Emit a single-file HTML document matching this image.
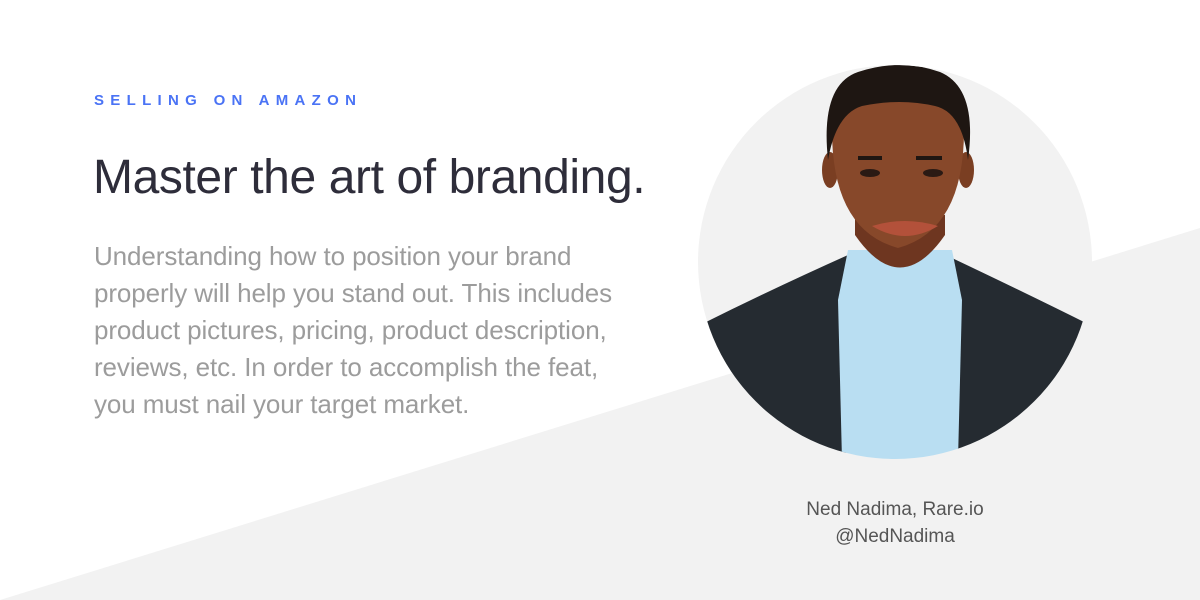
<!DOCTYPE html>
<html><head><meta charset="utf-8"><style>
html,body{margin:0;padding:0}
body{width:1200px;height:600px;position:relative;overflow:hidden;background:#fff;font-family:"Liberation Sans",sans-serif}
.k{position:absolute;left:94px;top:92px;font-size:15px;font-weight:bold;letter-spacing:6.3px;color:#4a73f5;white-space:nowrap}
h1{position:absolute;left:93px;top:150px;margin:0;font-size:48px;font-weight:normal;color:#2e2d3a;letter-spacing:-0.4px;white-space:nowrap}
p{position:absolute;left:94px;top:238px;margin:0;font-size:26px;line-height:37px;color:#9c9c9c;font-weight:normal;white-space:nowrap;letter-spacing:-0.1px}
.n{position:absolute;left:780px;width:230px;text-align:center;font-size:19px;color:#555}
</style></head><body>
<svg width="1200" height="600" style="position:absolute;left:0;top:0">
<polygon points="0,600 1200,228 1200,600" fill="#f2f2f2"/>
<defs><clipPath id="c"><circle cx="895" cy="262" r="197"/></clipPath></defs>
<circle cx="895" cy="262" r="197" fill="#f2f2f2"/>
<g clip-path="url(#c)">
<path d="M700,325 Q770,290 848,255 L846,460 L700,460Z" fill="#252b31"/>
<path d="M1090,325 Q1030,295 952,258 L958,460 L1090,460Z" fill="#252b31"/>
<path d="M848,250 L952,250 L962,300 L958,460 L842,460 L838,300Z" fill="#b9def2"/>
<path d="M855,235 Q900,300 945,235 L945,215 L855,215Z" fill="#6e3620"/>
<ellipse cx="830" cy="170" rx="8" ry="18" fill="#7a3e22"/>
<ellipse cx="966" cy="170" rx="8" ry="18" fill="#7a3e22"/>
<path d="M832,130 Q832,230 898,248 Q964,230 964,130 Q950,95 898,95 Q845,95 832,130Z" fill="#87482a"/>
<path d="M828,160 Q820,85 858,72 Q900,58 940,72 Q978,88 968,160 Q962,112 935,106 Q900,98 862,106 Q836,114 828,160Z" fill="#1e1612"/>
<path d="M872,226 Q905,216 938,226 Q905,246 872,226Z" fill="#b3513a"/>
<ellipse cx="870" cy="173" rx="10" ry="4" fill="#2a1a14"/>
<ellipse cx="933" cy="173" rx="10" ry="4" fill="#2a1a14"/>
<path d="M858,158 L882,158 M916,158 L942,158" stroke="#1e1612" stroke-width="4"/>
</g>
</svg>
<div class="k">SELLING ON AMAZON</div>
<h1>Master the art of branding.</h1>
<p>Understanding how to position your brand<br>properly will help you stand out. This includes<br>product pictures, pricing, product description,<br>reviews, etc. In order to accomplish the feat,<br>you must nail your target market.</p>
<div class="n" style="top:499px">Ned Nadima, Rare.io</div>
<div class="n" style="top:526px">@NedNadima</div>
</body></html>
